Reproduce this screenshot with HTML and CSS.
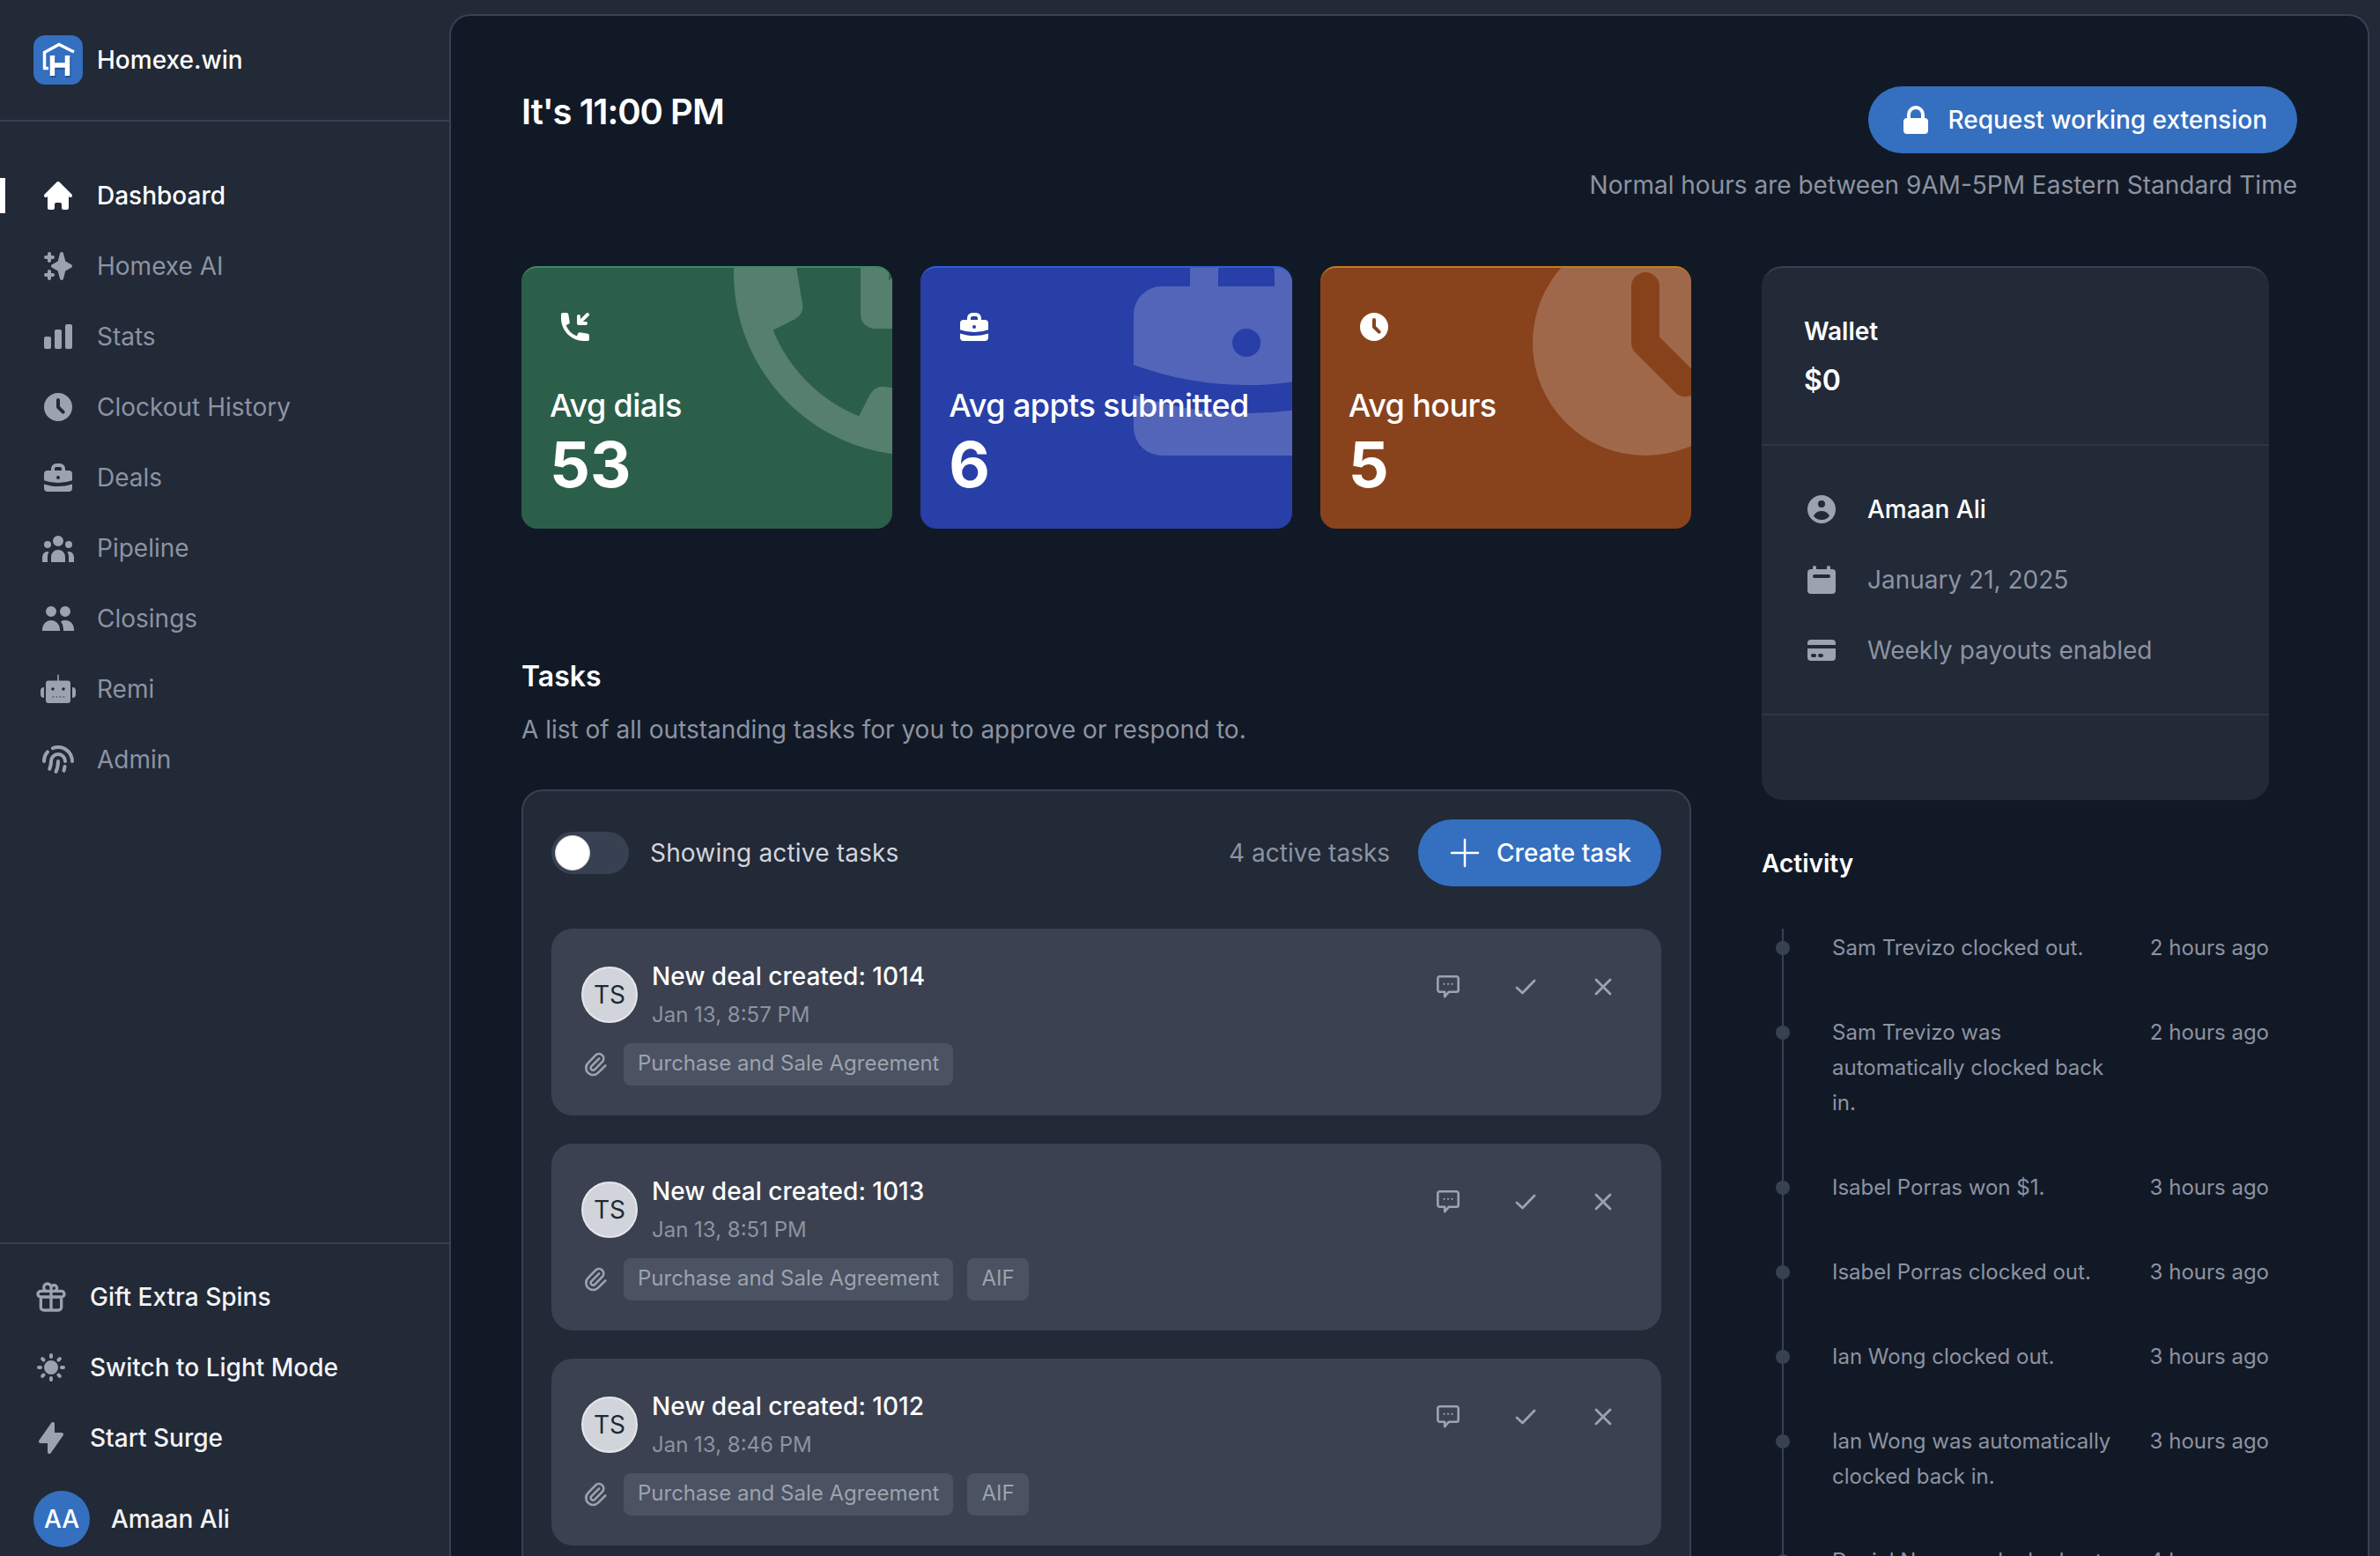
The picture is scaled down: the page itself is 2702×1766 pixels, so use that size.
FILE: index.html
```html
<!DOCTYPE html>
<html>
<head>
    <title>Homexe.win</title>
    <link rel="stylesheet" href="styles.css">
</head>
<body>

<svg class="icon-defs" xmlns="http://www.w3.org/2000/svg">
    <symbol id="i-home" viewBox="0 0 20 20"><path d="M10.707 2.293a1 1 0 00-1.414 0l-7 7a1 1 0 001.414 1.414L4 10.414V17a1 1 0 001 1h2a1 1 0 001-1v-2a1 1 0 011-1h2a1 1 0 011 1v2a1 1 0 001 1h2a1 1 0 001-1v-6.586l.293.293a1 1 0 001.414-1.414l-7-7z"/></symbol>
    <symbol id="i-sparkles" viewBox="0 0 20 20"><path d="M5 2a1 1 0 011 1v1h1a1 1 0 010 2H6v1a1 1 0 01-2 0V6H3a1 1 0 010-2h1V3a1 1 0 011-1zm0 10a1 1 0 011 1v1h1a1 1 0 110 2H6v1a1 1 0 11-2 0v-1H3a1 1 0 110-2h1v-1a1 1 0 011-1zM12 2a1 1 0 01.967.744L14.146 7.2 17.5 9.134a1 1 0 010 1.732l-3.354 1.935-1.18 4.455a1 1 0 01-1.933 0L9.854 12.8 6.5 10.866a1 1 0 010-1.732l3.354-1.935 1.18-4.455A1 1 0 0112 2z"/></symbol>
    <symbol id="i-bars" viewBox="0 0 20 20"><path d="M2 11a1 1 0 011-1h2a1 1 0 011 1v5a1 1 0 01-1 1H3a1 1 0 01-1-1v-5zM8 7a1 1 0 011-1h2a1 1 0 011 1v9a1 1 0 01-1 1H9a1 1 0 01-1-1V7zM14 4a1 1 0 011-1h2a1 1 0 011 1v12a1 1 0 01-1 1h-2a1 1 0 01-1-1V4z"/></symbol>
    <symbol id="i-clock" viewBox="0 0 20 20"><path fill-rule="evenodd" d="M10 18a8 8 0 100-16 8 8 0 000 16zm1-12a1 1 0 10-2 0v4a1 1 0 00.293.707l2.828 2.829a1 1 0 101.415-1.415L11 9.586V6z"/></symbol>
    <symbol id="i-briefcase" viewBox="0 0 20 20"><path fill-rule="evenodd" d="M6 6V5a3 3 0 013-3h2a3 3 0 013 3v1h2a2 2 0 012 2v3.57A22.952 22.952 0 0110 13a22.95 22.95 0 01-8-1.43V8a2 2 0 012-2h2zm2-1a1 1 0 011-1h2a1 1 0 011 1v1H8V5zm1 5a1 1 0 011-1h.01a1 1 0 110 2H10a1 1 0 01-1-1z"/><path d="M2 13.692V16a2 2 0 002 2h12a2 2 0 002-2v-2.308A24.974 24.974 0 0110 15c-2.796 0-5.487-.46-8-1.308z"/></symbol>
    <symbol id="i-group" viewBox="0 0 20 20"><path d="M13 6a3 3 0 11-6 0 3 3 0 016 0zM18 8a2 2 0 11-4 0 2 2 0 014 0zM14 15a4 4 0 00-8 0v3h8v-3zM6 8a2 2 0 11-4 0 2 2 0 014 0zM16 18v-3a5.972 5.972 0 00-.75-2.906A3.005 3.005 0 0119 15v3h-3zM4.75 12.094A5.973 5.973 0 004 15v3H1v-3a3 3 0 013.75-2.906z"/></symbol>
    <symbol id="i-users" viewBox="0 0 20 20"><path d="M9 6a3 3 0 11-6 0 3 3 0 016 0zM17 6a3 3 0 11-6 0 3 3 0 016 0zM12.93 17c.046-.327.07-.66.07-1a6.97 6.97 0 00-1.5-4.33A5 5 0 0119 16v1h-6.07zM6 11a5 5 0 015 5v1H1v-1a5 5 0 015-5z"/></symbol>
    <symbol id="i-robot" viewBox="0 0 20 20"><path fill-rule="evenodd" d="M9.6 2.2a.4.4 0 01.8 0v3.1h5.1a1.5 1.5 0 011.5 1.5v9.7a1.5 1.5 0 01-1.5 1.5h-11a1.5 1.5 0 01-1.5-1.5V6.800a1.500 1.500 0 011.500-1.500h5.100zM7 9.100a.9.9 0 100 1.800.9.9 0 000-1.800zm6 0a.9.9 0 100 1.800.9.9 0 000-1.800zM6.800 14.200h.8v.6h-.8zm2 0h.8v.6h-.8zm2 0h.8v.6h-.8zm2 0h.8v.6h-.8z"/><path d="M2 9v6a2 2 0 01-2-2v-2a2 2 0 012-2zM18 9v6a2 2 0 002-2v-2a2 2 0 00-2-2z"/></symbol>
    <symbol id="i-finger" viewBox="0 0 20 20"><path d="M6.625 2.655A9 9 0 0119 11a1 1 0 11-2 0 7 7 0 00-9.625-6.492 1 1 0 11-.75-1.853zM4.662 4.959A1 1 0 014.75 6.37 6.97 6.97 0 003 11a1 1 0 11-2 0 8.97 8.97 0 012.25-5.953 1 1 0 011.412-.088z"/><path d="M5 11a5 5 0 1110 0 1 1 0 11-2 0 3 3 0 10-6 0c0 1.677-.345 3.276-.968 4.729a1 1 0 11-1.838-.789A9.964 9.964 0 005 11zm8.921 2.012a1 1 0 01.831 1.145 19.86 19.86 0 01-.545 2.436 1 1 0 11-1.92-.558c.207-.713.371-1.445.49-2.192a1 1 0 011.144-.83z"/><path d="M10 10a1 1 0 011 1c0 2.236-.46 4.368-1.29 6.304a1 1 0 01-1.838-.789A13.952 13.952 0 009 11a1 1 0 011-1z"/></symbol>
    <symbol id="i-sun" viewBox="0 0 20 20"><path d="M10 2a1 1 0 011 1v1a1 1 0 11-2 0V3a1 1 0 011-1zm4 8a4 4 0 11-8 0 4 4 0 018 0zm-.464 4.95l.707.707a1 1 0 001.414-1.414l-.707-.707a1 1 0 00-1.414 1.414zm2.12-10.607a1 1 0 010 1.414l-.706.707a1 1 0 11-1.414-1.414l.707-.707a1 1 0 011.414 0zM17 11a1 1 0 100-2h-1a1 1 0 100 2h1zm-7 4a1 1 0 011 1v1a1 1 0 11-2 0v-1a1 1 0 011-1zM5.050 6.464A1 1 0 106.465 5.050l-.708-.707a1 1 0 00-1.414 1.414l.707.707zm1.414 8.486l-.707.707a1 1 0 01-1.414-1.414l.707-.707a1 1 0 011.414 1.414zM4 11a1 1 0 100-2H3a1 1 0 000 2h1z"/></symbol>
    <symbol id="i-bolt" viewBox="0 0 20 20"><path d="M11.300 1.046A1 1 0 0112 2v5h4a1 1 0 01.820 1.573l-7 10A1 1 0 018 18v-5H4a1 1 0 01-.820-1.573l7-10a1 1 0 011.120-.380z"/></symbol>
    <symbol id="i-lock" viewBox="0 0 20 20"><path fill-rule="evenodd" d="M5 9V7a5 5 0 0110 0v2a2 2 0 012 2v5a2 2 0 01-2 2H5a2 2 0 01-2-2v-5a2 2 0 012-2zm8-2v2H7V7a3 3 0 016 0z"/></symbol>
    <symbol id="i-phone" viewBox="0 0 20 20"><path d="M14.414 7l3.293-3.293a1 1 0 00-1.414-1.414L13 5.586V4a1 1 0 10-2 0v4.003a.996.996 0 00.617.921A.997.997 0 0012 9h4a1 1 0 100-2h-1.586z"/><path d="M2 3a1 1 0 011-1h2.153a1 1 0 01.986.836l.74 4.435a1 1 0 01-.54 1.060l-1.548.773a11.037 11.037 0 006.105 6.105l.774-1.548a1 1 0 011.059-.54l4.435.74a1 1 0 01.836.986V17a1 1 0 01-1 1h-2C7.820 18 2 12.180 2 5V3z"/></symbol>
    <symbol id="i-user" viewBox="0 0 20 20"><path fill-rule="evenodd" d="M18 10a8 8 0 11-16 0 8 8 0 0116 0zm-6-3a2 2 0 11-4 0 2 2 0 014 0zm-2 4a5 5 0 00-4.546 2.916A5.986 5.986 0 0010 16a5.986 5.986 0 004.546-2.084A5 5 0 0010 11z"/></symbol>
    <symbol id="i-calendar" viewBox="0 0 20 20"><path fill-rule="evenodd" d="M6 2a1 1 0 00-1 1v1H4a2 2 0 00-2 2v10a2 2 0 002 2h12a2 2 0 002-2V6a2 2 0 00-2-2h-1V3a1 1 0 10-2 0v1H7V3a1 1 0 00-1-1zm0 5a1 1 0 000 2h8a1 1 0 100-2H6z"/></symbol>
    <symbol id="i-card" viewBox="0 0 20 20"><path d="M4 4a2 2 0 00-2 2v1h16V6a2 2 0 00-2-2H4z"/><path fill-rule="evenodd" d="M18 9H2v5a2 2 0 002 2h12a2 2 0 002-2V9zM4 13a1 1 0 011-1h1a1 1 0 110 2H5a1 1 0 01-1-1zm5-1a1 1 0 100 2h1a1 1 0 100-2H9z"/></symbol>
    <symbol id="i-clip" viewBox="0 0 24 24"><path fill="none" stroke="currentColor" stroke-width="2" stroke-linecap="round" stroke-linejoin="round" d="M15.172 7l-6.586 6.586a2 2 0 102.828 2.828l6.414-6.586a4 4 0 00-5.656-5.656l-6.415 6.585a6 6 0 108.486 8.486L20.500 13"/></symbol>
    <symbol id="i-chat" viewBox="0 0 26 26"><path fill="none" stroke="currentColor" stroke-width="2.600" stroke-linejoin="round" d="M3.500 1.300h19a2.200 2.200 0 012.200 2.200v13a2.200 2.200 0 01-2.200 2.200h-8.500l-4.800 5.500v-5.500H3.500a2.200 2.200 0 01-2.200-2.200v-13a2.200 2.200 0 012.200-2.200z"/><circle cx="8.500" cy="9.800" r="1.100"/><circle cx="13" cy="9.800" r="1.100"/><circle cx="17.500" cy="9.800" r="1.100"/></symbol>
    <symbol id="i-check" viewBox="0 0 24 18"><path fill="none" stroke="currentColor" stroke-width="2.800" stroke-linecap="round" stroke-linejoin="round" d="M2 10l6.500 6L22 2"/></symbol>
    <symbol id="i-x" viewBox="0 0 20 20"><path fill="none" stroke="currentColor" stroke-width="2.800" stroke-linecap="round" d="M2 2l16 16M18 2L2 18"/></symbol>
</svg>

<div class="app">
    <aside class="sidebar">
        <div class="brand">
            <svg class="brand-logo" viewBox="0 0 56 56">
                <rect width="56" height="56" rx="13" fill="#346fc0"/>
                <path d="M12.500 38V19.500L29 10.500 46 19" fill="none" stroke="#fff" stroke-width="3.500"/>
                <path d="M11 37.500h6" fill="none" stroke="#fff" stroke-width="3.500"/>
                <path d="M21.500 24v23M38.500 24v23M21.500 35h17" fill="none" stroke="#25528f" stroke-width="6" transform="translate(1 1)"/>
                <path d="M21.500 23v23M38.500 23v23M21.500 34h17" fill="none" stroke="#fff" stroke-width="5.500"/>
            </svg>
            <span>Homexe.win</span>
        </div>

        <nav class="nav">
            <a class="nav-item active"><svg class="icon"><use href="#i-home"/></svg>Dashboard</a>
            <a class="nav-item"><svg class="icon"><use href="#i-sparkles"/></svg>Homexe AI</a>
            <a class="nav-item"><svg class="icon"><use href="#i-bars"/></svg>Stats</a>
            <a class="nav-item"><svg class="icon"><use href="#i-clock"/></svg>Clockout History</a>
            <a class="nav-item"><svg class="icon"><use href="#i-briefcase"/></svg>Deals</a>
            <a class="nav-item"><svg class="icon"><use href="#i-group"/></svg>Pipeline</a>
            <a class="nav-item"><svg class="icon"><use href="#i-users"/></svg>Closings</a>
            <a class="nav-item"><svg class="icon"><use href="#i-robot"/></svg>Remi</a>
            <a class="nav-item"><svg class="icon"><use href="#i-finger"/></svg>Admin</a>
        </nav>

        <div class="side-bottom">
            <a class="side-link">
                <svg class="icon" viewBox="0 0 24 24"><path fill="none" stroke="currentColor" stroke-width="2" stroke-linecap="round" stroke-linejoin="round" d="M12 8v13m0-13V6a2 2 0 112 2h-2zm0 0V5.500A2.500 2.500 0 109.500 8H12zm-7 4h14M5 12a2 2 0 110-4h14a2 2 0 110 4M5 12v7a2 2 0 002 2h10a2 2 0 002-2v-7"/></svg>
                Gift Extra Spins
            </a>
            <a class="side-link"><svg class="icon"><use href="#i-sun"/></svg>Switch to Light Mode</a>
            <a class="side-link"><svg class="icon"><use href="#i-bolt"/></svg>Start Surge</a>
            <div class="side-user">
                <span class="side-avatar">AA</span>
                Amaan Ali
            </div>
        </div>
    </aside>

    <main class="main">
        <header class="top">
            <h1>It's 11:00 PM</h1>
            <div class="top-right">
                <button class="btn"><svg class="icon"><use href="#i-lock"/></svg>Request working extension</button>
                <p class="muted">Normal hours are between 9AM-5PM Eastern Standard Time</p>
            </div>
        </header>

        <div class="columns">
            <section class="left">
                <div class="stats">
                    <div class="stat green">
                        <svg class="stat-bg"><use href="#i-phone"/></svg>
                        <svg class="icon"><use href="#i-phone"/></svg>
                        <div class="stat-label">Avg dials</div>
                        <div class="stat-num">53</div>
                    </div>
                    <div class="stat blue">
                        <svg class="stat-bg"><use href="#i-briefcase"/></svg>
                        <svg class="icon"><use href="#i-briefcase"/></svg>
                        <div class="stat-label">Avg appts submitted</div>
                        <div class="stat-num">6</div>
                    </div>
                    <div class="stat orange">
                        <svg class="stat-bg"><use href="#i-clock"/></svg>
                        <svg class="icon"><use href="#i-clock"/></svg>
                        <div class="stat-label">Avg hours</div>
                        <div class="stat-num">5</div>
                    </div>
                </div>

                <h2 class="tasks-title">Tasks</h2>
                <p class="muted tasks-sub">A list of all outstanding tasks for you to approve or respond to.</p>

                <div class="tasks">
                    <div class="tasks-bar">
                        <span class="toggle"><span class="knob"></span></span>
                        <span class="toggle-label">Showing active tasks</span>
                        <span class="muted tasks-count">4 active tasks</span>
                        <button class="btn btn-create">
                            <svg class="icon" viewBox="0 0 24 24"><path fill="none" stroke="currentColor" stroke-width="1.500" stroke-linecap="round" d="M12 3v18M3 12h18"/></svg>
                            Create task
                        </button>
                    </div>

                    <div class="task">
                        <div class="task-head">
                            <span class="task-avatar">TS</span>
                            <div class="task-text">
                                <div class="task-title">New deal created: 1014</div>
                                <div class="task-date">Jan 13, 8:57 PM</div>
                            </div>
                            <div class="task-actions">
                                <svg class="act act-chat"><use href="#i-chat"/></svg>
                                <svg class="act act-check"><use href="#i-check"/></svg>
                                <svg class="act act-x"><use href="#i-x"/></svg>
                            </div>
                        </div>
                        <div class="task-files">
                            <svg class="clip"><use href="#i-clip"/></svg>
                            <span class="chip">Purchase and Sale Agreement</span>
                        </div>
                    </div>

                    <div class="task">
                        <div class="task-head">
                            <span class="task-avatar">TS</span>
                            <div class="task-text">
                                <div class="task-title">New deal created: 1013</div>
                                <div class="task-date">Jan 13, 8:51 PM</div>
                            </div>
                            <div class="task-actions">
                                <svg class="act act-chat"><use href="#i-chat"/></svg>
                                <svg class="act act-check"><use href="#i-check"/></svg>
                                <svg class="act act-x"><use href="#i-x"/></svg>
                            </div>
                        </div>
                        <div class="task-files">
                            <svg class="clip"><use href="#i-clip"/></svg>
                            <span class="chip">Purchase and Sale Agreement</span>
                            <span class="chip">AIF</span>
                        </div>
                    </div>

                    <div class="task">
                        <div class="task-head">
                            <span class="task-avatar">TS</span>
                            <div class="task-text">
                                <div class="task-title">New deal created: 1012</div>
                                <div class="task-date">Jan 13, 8:46 PM</div>
                            </div>
                            <div class="task-actions">
                                <svg class="act act-chat"><use href="#i-chat"/></svg>
                                <svg class="act act-check"><use href="#i-check"/></svg>
                                <svg class="act act-x"><use href="#i-x"/></svg>
                            </div>
                        </div>
                        <div class="task-files">
                            <svg class="clip"><use href="#i-clip"/></svg>
                            <span class="chip">Purchase and Sale Agreement</span>
                            <span class="chip">AIF</span>
                        </div>
                    </div>
                </div>
            </section>

            <section class="right">
                <div class="wallet">
                    <div class="wallet-top">
                        <div class="wallet-label">Wallet</div>
                        <div class="wallet-amount">$0</div>
                    </div>
                    <div class="wallet-rows">
                        <div class="wallet-row strong"><svg class="icon"><use href="#i-user"/></svg>Amaan Ali</div>
                        <div class="wallet-row"><svg class="icon"><use href="#i-calendar"/></svg>January 21, 2025</div>
                        <div class="wallet-row"><svg class="icon"><use href="#i-card"/></svg>Weekly payouts enabled</div>
                    </div>
                    <div class="wallet-foot"></div>
                </div>

                <h2 class="activity-title">Activity</h2>
                <ul class="activity">
                    <li><span class="a-text">Sam Trevizo clocked out.</span><span class="a-time">2 hours ago</span></li>
                    <li><span class="a-text">Sam Trevizo was automatically clocked back in.</span><span class="a-time">2 hours ago</span></li>
                    <li><span class="a-text">Isabel Porras won $1.</span><span class="a-time">3 hours ago</span></li>
                    <li><span class="a-text">Isabel Porras clocked out.</span><span class="a-time">3 hours ago</span></li>
                    <li><span class="a-text">Ian Wong clocked out.</span><span class="a-time">3 hours ago</span></li>
                    <li><span class="a-text">Ian Wong was automatically clocked back in.</span><span class="a-time">3 hours ago</span></li>
                    <li><span class="a-text">Daniel Navarro clocked out.</span><span class="a-time">4 hours ago</span></li>
                </ul>
            </section>
        </div>
    </main>
</div>

</body>
</html>
```

FILE: styles.css
```css
* { box-sizing: border-box; }
html, body { margin: 0; height: 1766px; overflow: hidden; }
body { font-family: Inter, "Noto Sans", sans-serif; font-size: 28px; line-height: 40px; background-color: #222937; color: #fff; }
h1, h2, p, ul { margin: 0; padding: 0; }

.icon-defs { position: absolute; width: 0; height: 0; }
.icon { width: 40px; height: 40px; flex: none; fill: currentColor; }
.muted { color: #8c93a1; }

.app { display: flex; height: 1766px; }

/* sidebar */
.sidebar { width: 510px; flex: none; display: flex; flex-direction: column; }
.brand { height: 138px; padding: 40px 0 0 38px; display: flex; align-items: flex-start; gap: 16px; border-bottom: 2px solid #374151; font-weight: 500; }
.brand span { line-height: 56px; }
.brand-logo { width: 56px; height: 56px; }
.nav { padding-top: 64px; display: flex; flex-direction: column; gap: 40px; }
.nav-item { position: relative; display: flex; align-items: center; gap: 24px; height: 40px; padding-left: 46px; color: #8c93a1; }
.nav-item .icon { color: #9ca3af; }
.nav-item.active, .nav-item.active .icon { color: #fff; font-weight: 500; }
.nav-item.active::before { content: ""; position: absolute; left: 0; top: 0; width: 6px; height: 40px; background-color: #fff; }
.side-bottom { margin-top: auto; border-top: 2px solid #374151; padding: 40px 0 10px 38px; display: flex; flex-direction: column; gap: 40px; }
.side-link { display: flex; align-items: center; gap: 24px; height: 40px; font-weight: 500; color: #f3f4f6; }
.side-link .icon { color: #9ca3af; }
.side-user { display: flex; align-items: center; gap: 24px; height: 64px; font-weight: 500; color: #f3f4f6; }
.side-avatar { width: 64px; height: 64px; border-radius: 50%; background-color: #346fc0; display: flex; align-items: center; justify-content: center; color: #fff; }

/* main panel */
.main { flex: 1; margin: 16px 12px 0 0; height: 1900px; padding: 78px 80px 0 80px; background-color: #121926; border: 2px solid #374151; border-radius: 24px 24px 0 0; }
.top { display: flex; justify-content: space-between; align-items: flex-start; height: 206px; }
.top h1 { font-size: 40px; line-height: 56px; font-weight: 600; letter-spacing: -1px; margin-top: 3px; }
.top-right { display: flex; flex-direction: column; align-items: flex-end; gap: 16px; margin-top: 2px; }
.btn { display: inline-flex; align-items: center; gap: 16px; height: 76px; padding: 0 34px; border: none; border-radius: 38px; background-color: #346fc0; color: #fff; font: 500 28px/40px Inter, sans-serif; }
.columns { display: flex; gap: 80px; padding-right: 32px; }

/* left column */
.left { width: 1328px; flex: none; }
.stats { display: grid; grid-template-columns: repeat(3, 1fr); gap: 32px; }
.stat { position: relative; overflow: hidden; height: 298px; border-radius: 18px; padding: 48px 32px 0; border-top: 2px solid; }
.stat > .icon { display: block; margin: -1px 0 0 9px; }
.stat-bg { position: absolute; top: -75px; right: -108px; width: 320px; height: 320px; fill: #fff; opacity: .2; }
.stat-label { position: relative; font-size: 36px; line-height: 48px; font-weight: 500; letter-spacing: -.6px; margin-top: 45px; }
.stat-num { position: relative; font-size: 72px; line-height: 72px; font-weight: 700; margin-top: 7px; }
.green { background-color: #2c5f4a; border-color: #3c8a62; }
.blue { background-color: #283fa8; border-color: #2f5fd6; }
.orange { background-color: #88431d; border-color: #c47a22; }
.tasks-title { font-size: 32px; line-height: 40px; font-weight: 600; margin-top: 148px; }
.tasks-sub { margin-top: 20px; }
.tasks { margin-top: 48px; height: 1000px; padding: 32px; background-color: #222937; border: 2px solid #374151; border-radius: 24px 24px 0 0; }
.tasks-bar { display: flex; align-items: center; height: 76px; margin-bottom: 48px; }
.toggle { width: 88px; height: 48px; border-radius: 24px; background-color: #374151; padding: 4px; }
.knob { display: block; width: 40px; height: 40px; border-radius: 50%; background-color: #fff; border: 1px solid #d1d5db; }
.toggle-label { margin-left: 24px; color: #d1d5db; letter-spacing: .17px; }
.tasks-count { margin-left: auto; margin-right: 32px; }
.btn-create { padding: 0 34px 0 33px; }
.task { height: 212px; margin-bottom: 32px; padding: 40px 32px 0 34px; border-radius: 24px; background-color: #3b4150; }
.task-head { position: relative; display: flex; gap: 16px; height: 90px; }
.task-avatar { width: 64px; height: 64px; margin-top: 3px; flex: none; border-radius: 50%; border: 2px solid #e5e7eb; background-color: #d1d5db; color: #1f2937; display: flex; align-items: center; justify-content: center; }
.task-title { font-weight: 500; line-height: 28px; }
.task-date { font-size: 24px; line-height: 32px; margin-top: 14px; color: #8c93a1; }
.task-actions { position: absolute; top: 12px; right: -10px; display: grid; grid-template-columns: repeat(3, 88px); justify-items: center; align-items: center; height: 28px; color: #9ca3af; }
.act { fill: currentColor; }
.act-chat { width: 26px; height: 26px; }
.act-check { width: 24px; height: 18px; }
.act-x { width: 20px; height: 20px; }
.task-files { display: flex; align-items: center; gap: 16px; }
.clip { width: 32px; height: 32px; color: #9ca3af; flex: none; }
.chip { height: 48px; line-height: 46px; padding: 0 16px; border-radius: 8px; background-color: #4b5261; color: #9ca3af; font-size: 24px; }

/* right column */
.right { flex: 1; }
.wallet { height: 606px; background-color: #222937; border-radius: 24px; border-top: 2px solid #374151; }
.wallet-top { height: 202px; padding: 52px 48px 0; border-bottom: 2px solid #2f3746; }
.wallet-label { font-weight: 600; }
.wallet-amount { font-size: 32px; font-weight: 600; margin-top: 16px; }
.wallet-rows { height: 306px; padding: 52px 48px 0; display: flex; flex-direction: column; gap: 40px; border-bottom: 2px solid #2f3746; }
.wallet-row { display: flex; align-items: center; gap: 32px; color: #8c93a1; height: 40px; }
.wallet-row .icon { color: #9ca3af; }
.wallet-row.strong { color: #fff; font-weight: 500; }
.activity-title { font-size: 28px; line-height: 40px; font-weight: 600; margin-top: 52px; }
.activity { position: relative; list-style: none; margin-top: 54px; }
.activity::before { content: ""; position: absolute; left: 23px; top: 0; bottom: 0; width: 2px; background-color: #374151; }
.activity li { position: relative; display: flex; padding: 2px 0 54px 80px; font-size: 24px; color: #8c93a1; }
.activity li::before { content: ""; position: absolute; left: 16px; top: 14px; width: 16px; height: 16px; border-radius: 50%; background-color: #374151; }
.a-text { flex: 1; }
.a-time { flex: none; margin-left: 32px; }
```
